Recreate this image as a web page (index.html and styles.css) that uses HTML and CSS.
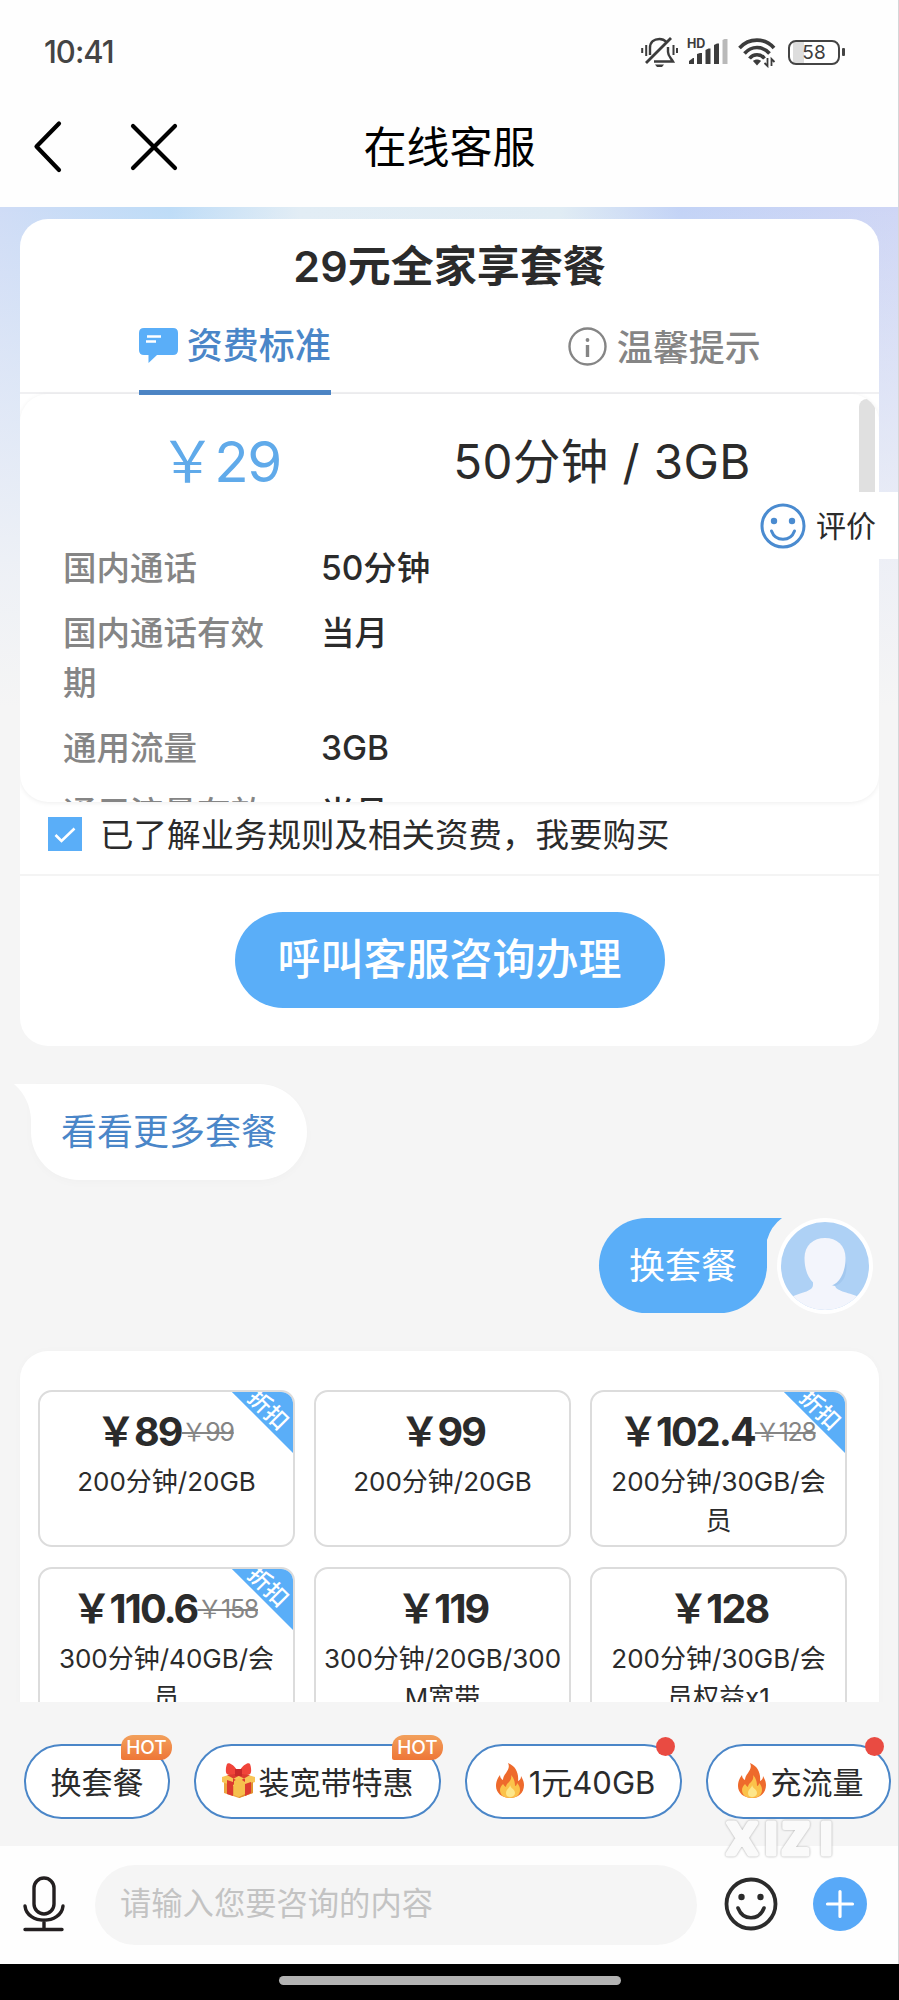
FILE: index.html
```html
<!DOCTYPE html>
<html lang="zh-CN">
<head>
<meta charset="utf-8">
<title>在线客服</title>
<link rel="stylesheet" href="styles.css">
</head>
<body>
<svg class="defs" width="0" height="0">
  <symbol id="flame" viewBox="0 0 28 35">
    <path d="M12 0c2 4 0 7-2 10-2 2-3 5-3 7-2-1-3-3-3-5-3 4-4 7-4 11 0 7 6 12 14 12s14-5 14-13c0-4-2-7-3-9 0 3-1 4-3 5C23 11 20 3 12 0z" fill="#ee6a2c"/>
    <path d="M15 12c1 4-1 6-3 8-1 1-2 2-2 4-2-1-2-2-3-3-2 2-3 4-3 6 0 5 4 8 10 8s10-3 10-8c0-3-1-5-3-7 0 2-1 3-2 3 0-4-1-8-4-11z" fill="#fbc24a"/>
    <path d="M14 22c0 3-4 4-4 8 0 3 2 4 4 4 3 0 5-2 5-4 0-4-4-4-5-8z" fill="#fde68a"/>
  </symbol>
</svg>
<div class="screen">
  <header class="status">
    <span class="time">10:41</span>
    <div class="status-icons">
      <svg width="37" height="32" viewBox="0 0 37 32" fill="none" stroke="#3c3c3c" stroke-width="2.4">
        <path d="M9 19V12c0-6 4-9 9.500-9 3 0 5 1 7 3M27 11v5c0 4 3 6 5 9.500H13"/>
        <path d="M5 27L30 2" stroke-width="2.800"/>
        <path d="M1.200 12v5M5.200 9v11M32.500 9v10M36 12v5" stroke-width="2"/>
        <path d="M14 28.500h9l-2 2.500h-5z" fill="#3c3c3c" stroke="none"/>
      </svg>
      <svg width="42" height="32" viewBox="0 0 42 32">
        <text x="0" y="12" class="hd">HD</text>
        <g fill="#3c3c3c"><path d="M2 28v-3l4-3h1v6z"/><path d="M10 28V18l3-1h2v11z"/><path d="M18.500 28V14l3-1.500h2V28z"/><path d="M27 28V9l3-1.500h2V28z"/></g>
        <path d="M35.500 28V4l2-1h3v25z" fill="#b9b9b9"/>
      </svg>
      <svg width="38" height="32" viewBox="0 0 38 32" fill="none" stroke="#3c3c3c" stroke-width="3.600">
        <path d="M1.500 12C11 1.500 27 1.500 36 12M6.500 17.500c7-8 18-8 25 0M11.500 22.500c4-5 11-5 15 0"/>
        <path d="M15 25c2-2 6-2 8 0l-4 4.500z" fill="#3c3c3c" stroke="none"/>
        <path d="M29.500 22v8l-3-3M33.500 30v-7l3 3" stroke-width="1.800"/>
      </svg>
      <div class="battery"><span>58</span></div>
    </div>
  </header>
  <nav class="titlebar">
    <svg class="back" width="32" height="54" viewBox="0 0 32 54"><path d="M26 3.500L3.500 26.500 26 50" fill="none" stroke="#000" stroke-width="4.200" stroke-linecap="round" stroke-linejoin="round"/></svg>
    <svg class="close" width="48" height="48" viewBox="0 0 48 48"><path d="M3 3l42 42M45 3L3 45" stroke="#000" stroke-width="4.200" stroke-linecap="round"/></svg>
    <h1>在线客服</h1>
  </nav>

  <main class="chat">
    <section class="plan">
      <h2>29元全家享套餐</h2>
      <div class="tabs">
        <div class="tab"><div class="tab-in on">
          <svg width="39" height="35" viewBox="0 0 39 35"><path d="M5 0h29q5 0 5 5v17q0 5-5 5H18l-8.500 8V27H5q-5 0-5-5V5q0-5 5-5z" fill="#5aaef8"/><path d="M8 8.500h14M7 13.500h10" stroke="#fff" stroke-width="2.400"/></svg>
          <span>资费标准</span></div></div>
        <div class="tab"><div class="tab-in">
          <svg width="39" height="39" viewBox="0 0 39 39" fill="none" stroke="#858585"><circle cx="19.500" cy="19.500" r="18" stroke-width="2.400"/><path d="M19.500 18v12" stroke-width="3.400"/><circle cx="19.500" cy="13" r="1" stroke-width="1.800"/></svg>
          <span>温馨提示</span></div></div>
      </div>
      <div class="scroll">
        <div class="sum"><span class="fee">￥29</span><span class="quota">50分钟 / 3GB</span></div>
        <dl>
          <dt>国内通话</dt><dd>50分钟</dd>
          <dt>国内通话有效期</dt><dd>当月</dd>
          <dt>通用流量</dt><dd>3GB</dd>
          <dt>通用流量有效期</dt><dd>当月</dd>
        </dl>
        <i class="bar"></i>
      </div>
      <label class="agree">
        <svg width="34" height="34" viewBox="0 0 34 34"><path fill="#5aaef8" d="M0 0h34v34H0z"/><path d="M7.500 18l6 6L26.500 11.500" fill="none" stroke="#fff" stroke-width="2.600"/></svg>
        <span>已了解业务规则及相关资费，我要购买</span>
      </label>
      <div class="act"><button>呼叫客服咨询办理</button></div>
    </section>

    <div class="bubble left">看看更多套餐
      <svg class="tail" width="20" height="50" viewBox="0 0 20 50"><path d="M0 0h20v50h-3V36Q16 14 0 0z" fill="#fff"/></svg>
    </div>
    <div class="me">
      <div class="bubble right">换套餐
        <svg class="tail" width="18" height="50" viewBox="0 0 18 50"><path d="M0 0h17Q6 8 2 22v28H0z" fill="#5aaef8"/></svg>
      </div>
      <svg class="avatar" width="96" height="96" viewBox="0 0 96 96">
        <defs><clipPath id="c"><circle cx="48" cy="48" r="44"/></clipPath></defs>
        <circle cx="48" cy="48" r="48" fill="#fff"/>
        <g clip-path="url(#c)"><path fill="#aed1f5" d="M0 0h96v96H0z"/>
          <path d="M36 60v7c0 6-10 7-22 12v17h68V79c-12-5-24-6-24-12v-7z" fill="#f3f5fc"/>
          <path d="M54 67c7-3 13-11 15-24 2 12-2 22-11 25z" fill="#a3c8ef"/>
          <path d="M27.500 40c0-13 9-20 20.500-20s20.500 7 20.500 20c0 17-8 29-20.500 29S27.500 57 27.500 40z" fill="#f3f5fc"/></g>
      </svg>
    </div>

    <section class="offers">
      <article><b class="off">折扣</b><p class="price">￥89<s>￥99</s></p><p>200分钟/20GB</p></article>
      <article><p class="price">￥99</p><p>200分钟/20GB</p></article>
      <article><b class="off">折扣</b><p class="price">￥102.4<s>￥128</s></p><p>200分钟/30GB/会<br>员</p></article>
      <article><b class="off">折扣</b><p class="price">￥110.6<s>￥158</s></p><p>300分钟/40GB/会<br>员</p></article>
      <article><p class="price">￥119</p><p>300分钟/20GB/300<br>M宽带</p></article>
      <article><p class="price">￥128</p><p>200分钟/30GB/会<br>员权益x1</p></article>
    </section>
  </main>

  <aside class="rate">
    <svg width="46" height="46" viewBox="0 0 46 46" fill="none" stroke="#4a8bd0"><circle cx="23" cy="23" r="21" stroke-width="3"/><path d="M11.500 28c4 11 19 11 23 0" stroke-width="3" stroke-linecap="round"/><g fill="#4a8bd0" stroke="none"><circle cx="14" cy="18" r="3.200"/><circle cx="32" cy="18" r="3.200"/></g></svg>
    <span>评价</span>
  </aside>

  <div class="quick">
    <div class="chip c1">换套餐<em>HOT</em></div>
    <div class="chip c2">
      <svg class="gift" width="33" height="35" viewBox="0 0 33 35">
        <path d="M2 18l15 5 14-5v12l-14 5-15-5z" fill="#eda43f"/><path d="M0 14l16-5 17 5v5l-16 6L0 19z" fill="#f8c557"/>
        <path d="M17 24l14-5v11l-14 5z" fill="#e0912f"/><path d="M5 17l6 2v14l-6-2zM23 21l6-2v11l-6 3z" fill="#dc3a30"/><path d="M5 12l6-2 12 6v6zM28 12l-6-2-11 6v6z" fill="#dc3a30"/>
        <path d="M12 18l5-3 6 4v12l-6 3-5-2z" fill="#f6c04d"/>
        <path d="M16 9C12 1 6-1 5 1S3 10 5 11s8 1 11-2zM17 9c4-8 10-10 11-8s2 9 0 10-8 1-11-2z" fill="#f0443a"/><path d="M13 6h7v7h-7z" fill="#c9282a"/>
      </svg>装宽带特惠<em>HOT</em></div>
    <div class="chip c3"><svg class="fl" width="28" height="35"><use href="#flame"/></svg>1元40GB<i></i></div>
    <div class="chip c4"><svg class="fl" width="28" height="35"><use href="#flame"/></svg>充流量<i></i></div>
  </div>

  <footer class="compose">
    <svg width="42" height="56" viewBox="0 0 42 56" fill="none" stroke="#231f20" stroke-width="3.400" stroke-linecap="round"><rect x="11" y="2" width="20" height="36" rx="10"/><path d="M2 30c2 19 36 19 38 0M21 44v9M2 53.500h37"/></svg>
    <div class="field">请输入您要咨询的内容</div>
    <svg class="smile" width="54" height="54" viewBox="0 0 54 54" fill="none" stroke="#2b2b2b"><circle cx="27" cy="27" r="24.500" stroke-width="3.800"/><path d="M14 31c5 13 21 13 26 0" stroke-width="3.600" stroke-linecap="round"/><g fill="#2b2b2b" stroke="none"><circle cx="17.500" cy="20" r="3.200"/><circle cx="36.500" cy="20" r="3.200"/></g></svg>
    <svg class="plus" width="54" height="54" viewBox="0 0 54 54"><circle cx="27" cy="27" r="27" fill="#58a9f8"/><path d="M14.500 27h25M27 14.500v25" stroke="#fff" stroke-width="3.200" stroke-linecap="round"/></svg>
  </footer>
  <svg class="mark" width="120" height="48" viewBox="0 0 120 48"><text x="8 45 63 100" y="38.500">XIZI</text></svg>
  <div class="home"><i></i></div>
</div>
</body>
</html>
```
FILE: styles.css
```css
* { box-sizing: border-box; margin: 0; padding: 0; }
body {
  width: 899px; height: 2000px; overflow: hidden; background: #fefefe;
  font-family: Inter, "Noto Sans CJK SC", sans-serif; color: #2b2b2b;
}
svg { display: block; flex: none; }
.defs { position: absolute; }
.screen { position: relative; display: flex; flex-direction: column; width: 899px; height: 2000px; }
.screen::after { content: ""; position: absolute; right: 0; top: 0; width: 1px; height: 1964px; background: #d6d6d8; }

.status { height: 104px; padding: 0 54px 0 44px; display: flex; justify-content: space-between; align-items: center; }
.time { font-size: 31px; font-weight: 500; letter-spacing: -1px; color: #444; margin-top: -2px; }
.status-icons { display: flex; align-items: center; gap: 9px; }
.hd { font: 700 12.5px Inter, sans-serif; fill: #3c3c3c; }
.battery { position: relative; width: 52px; height: 25px; margin: 0 5px 0 3px; border: 2.5px solid #444; border-radius: 8px; font-size: 19px; line-height: 21px; text-align: center; color: #3c3c3c; background: linear-gradient(90deg, #fff 3px, #ddd 3px, #ddd 14px, #fff 14px); }
.battery::after { content: ""; position: absolute; right: -7px; top: 6px; width: 3px; height: 8px; border-radius: 1px; background: #444; }

.titlebar { position: relative; height: 103px; display: flex; align-items: center; padding: 0 0 17px 33px; }
.close { margin-left: 65px; }
.titlebar h1 { position: absolute; left: 0; right: 0; text-align: center; font-size: 43px; font-weight: 400; line-height: 60px; color: #000; }

.chat {
  height: 1495px; overflow: hidden; padding: 12px 20px 0;
  background: linear-gradient(180deg, rgba(245,245,245,0) 0, rgba(240,243,247,.5) 190px, rgba(243,244,246,.85) 360px, #f5f5f5 500px),
    linear-gradient(90deg, #cfdcf6 0, #bedcf7 170px, #e2edf5 300px, #e0ecf4 560px, #c3d3f6 680px, #cfd6f5 100%);
}
.plan { height: 827px; border-radius: 28px; background: #fff; overflow: hidden; }
.plan h2 { height: 94px; line-height: 95px; text-align: center; font-size: 43px; font-weight: 600; }
.tabs { display: flex; height: 81px; border-bottom: 2px solid #f0f0f2; }
.tab { flex: 1; display: flex; justify-content: center; }
.tab-in { height: 82px; display: flex; align-items: center; gap: 10px; font-size: 36px; font-weight: 500; color: #858585; padding: 0 0 15px; }
.tab-in span { padding-bottom: 4px; }
.on { gap: 9px; color: #4a86c8; border-bottom: 5px solid #4d86c6; padding-bottom: 13px; }
.scroll { position: relative; height: 408px; overflow: hidden; border-radius: 28px; box-shadow: 0 1px 5px rgba(0,0,0,.07); }
.sum { display: flex; height: 150px; padding-top: 30px; line-height: 76px; }
.fee { width: 410px; padding-right: 10px; text-align: center; color: #60aaea; font-size: 56.500px; letter-spacing: -1.500px; font-weight: 400; }
.quota { width: 344px; text-align: center; font-size: 47.500px; letter-spacing: .4px; }
dl { display: grid; grid-template-columns: 258px 1fr; row-gap: 15.600px; padding-left: 43px; font-size: 33.500px; line-height: 49.600px; }
dt { width: 215px; color: #858585; font-weight: 500; }
dd { font-weight: 500; }
.bar { position: absolute; right: 4px; top: 5px; width: 16px; height: 120px; border-radius: 8px; background: #e0e0e0; }
.agree { height: 74px; display: flex; align-items: center; gap: 18px; padding-left: 28px; padding-bottom: 8px; font-size: 33.500px; border-bottom: 2px solid #f4f4f4; }
.agree span { padding-bottom: 4px; }
.act { display: flex; justify-content: center; padding-top: 36px; }
.act button { width: 430px; height: 96px; border: 0; border-radius: 48px; background: #5aaef8; color: #fff; font: 500 43px/92px Inter, "Noto Sans CJK SC", sans-serif; padding-bottom: 2px; }

.bubble { position: relative; height: 96px; line-height: 96px; font-size: 36px; }
.left { width: 276px; margin: 38px 0 0 11px; padding-left: 30px; color: #4a86c8; background: #fff; border-radius: 0 48px 48px 48px; box-shadow: 0 3px 10px rgba(0,0,0,.02); }
.left .tail { position: absolute; left: -17px; top: 0; }
.me { display: flex; justify-content: flex-end; gap: 10px; margin: 38px 6px 0 0; }
.right { width: 168px; height: 95px; padding-left: 30px; color: #fff; background: #5aaef8; border-radius: 48px 0 48px 48px; }
.right .tail { position: absolute; left: 166px; top: 0; }

.offers { margin-top: 37px; height: 520px; padding: 39px 0 0 18px; border-radius: 28px; background: #fff; display: grid; grid-template-columns: repeat(3, 257px); grid-auto-rows: 157px; gap: 20px 19px; box-shadow: 0 0 8px rgba(0,0,0,.02); }
article { position: relative; overflow: hidden; border: 2px solid #dcdcdc; border-radius: 14px; padding: 12px 4px 0; text-align: center; font-size: 26px; line-height: 39px; white-space: nowrap; }
.offers p { position: relative; }
.price { display: flex; justify-content: center; height: 58px; line-height: 57px; font-size: 39.500px; font-weight: 700; letter-spacing: -1.900px; }
.price s { font-size: 25px; font-weight: 400; color: #858585; letter-spacing: -1.300px; margin-right: 3px; text-decoration-thickness: 2px; }
.off { position: absolute; right: -43px; top: -14px; width: 130px; height: 44px; padding-left: 10px; transform: rotate(45deg); background: #5aaef8; color: #fff; font-size: 23px; font-weight: 500; line-height: 62px; }

.rate { position: absolute; right: 1px; top: 492px; width: 146px; height: 67px; background: #fff; border-radius: 32px 0 0 32px; display: flex; align-items: center; gap: 10px; padding-left: 8px; font-size: 30px; }
.rate span { padding-bottom: 4px; }

.quick { height: 144px; flex: none; background: #f5f5f5; display: flex; gap: 24px; padding: 42px 0 0 24px; }
.chip { position: relative; flex: none; display: flex; align-items: center; justify-content: center; height: 75px; padding-bottom: 3px; border: 2px solid #4a86c8; border-radius: 38px; background: #fff; font-size: 31px; white-space: nowrap; }
.c1 { width: 146px; }
.c2 { width: 247px; }
.c3 { width: 217px; }
.c4 { width: 185px; }
.gift { margin-right: 4px; }
.fl { margin: 0 5px 0 4px; }
.chip em { position: absolute; right: -4px; top: -11px; width: 51px; height: 25px; border-radius: 12px 12px 12px 2px; background: linear-gradient(#f2a05c, #ee7637); color: #fff; font: 500 19px/25px Inter, sans-serif; text-align: center; }
.chip i { position: absolute; right: 5px; top: -9px; width: 19px; height: 19px; border-radius: 50%; background: #e94b42; }

.compose { height: 118px; background: #fefefe; display: flex; align-items: center; padding: 0 0 2px 23px; }
.field { width: 602px; height: 80px; margin: 1px 0 0 30px; padding-left: 25px; border-radius: 40px; background: #f5f5f5; color: #c3c3c3; font-size: 31.300px; line-height: 78px; }
.smile { margin-left: 27px; }
.plus { margin-left: 35px; }
.mark { position: absolute; left: 720px; top: 1815px; filter: drop-shadow(0 0 1px #a8a8a8); }
.mark text { font: 700 42px Lato, sans-serif; fill: #fafafa; stroke: #fafafa; stroke-width: 5px; stroke-linejoin: round; }
.home { height: 36px; background: #000; display: flex; justify-content: center; padding-top: 12px; }
.home i { width: 342px; height: 9px; border-radius: 5px; background: #b3b3b3; }
```
